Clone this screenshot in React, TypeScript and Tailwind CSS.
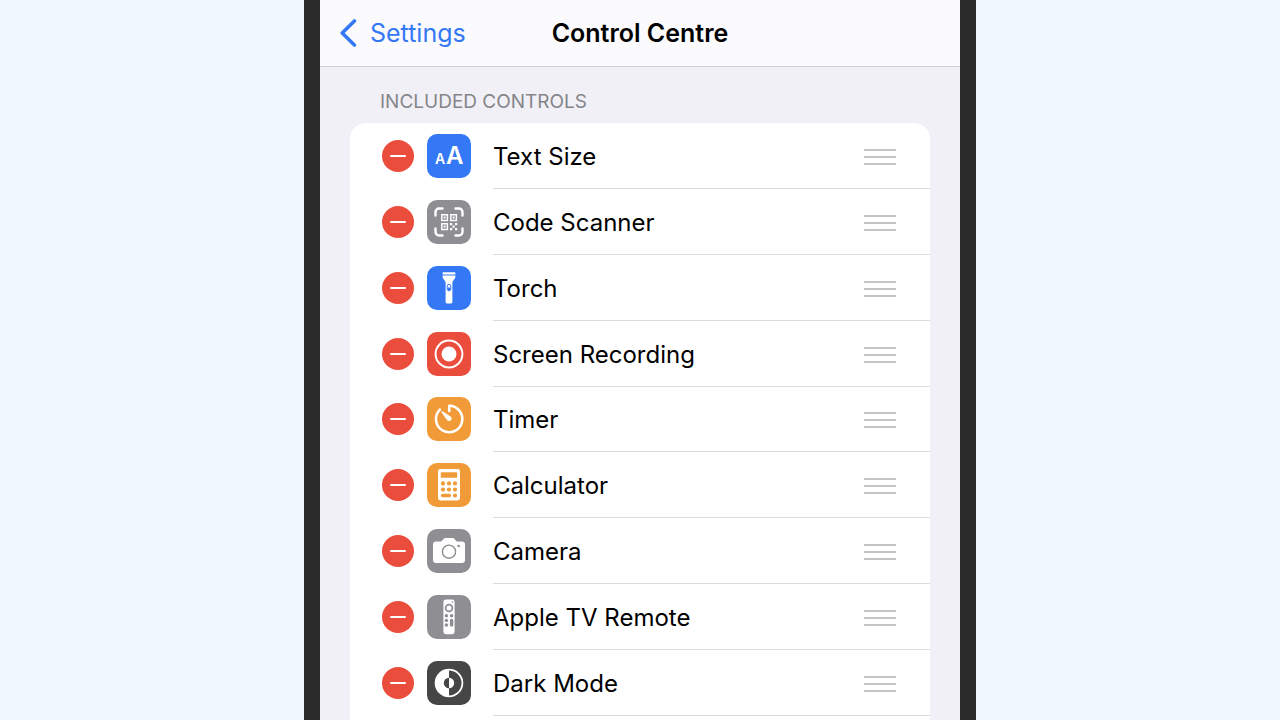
import type { ReactNode } from 'react';

interface Control {
    name: string;
    color: string;
    glyph: ReactNode;
}

// Glyphs share a 44x44 view box, the size of the tile they sit on
const controls: Control[] = [
    {
        name: 'Text Size',
        color: 'bg-[#3478f6]',
        glyph: (
            <g fill="#fff" className="font-semibold">
                <text x="8" y="30" fontSize="14">A</text>
                <text x="19" y="30" fontSize="24">A</text>
            </g>
        ),
    },
    {
        name: 'Code Scanner',
        color: 'bg-[#8e8e93]',
        glyph: (
            <>
                <path
                    fill="none"
                    stroke="#fff"
                    strokeWidth="2.4"
                    strokeLinecap="round"
                    d="M8.5 15.5V12a3.5 3.5 0 0 1 3.5-3.5h3.5M28.5 8.5H32a3.5 3.5 0 0 1 3.5 3.5v3.5M35.5 28.5V32a3.5 3.5 0 0 1-3.5 3.5h-3.5M15.5 35.5H12A3.5 3.5 0 0 1 8.5 32v-3.5"
                />
                <path fill="none" stroke="#fff" strokeWidth="1.5" d="M14.8 14.8h5.6v5.6h-5.6zM23.8 14.8h5.6v5.6h-5.6zM14.8 23.8h5.6v5.6h-5.6z" />
                <path fill="#fff" d="M16.6 16.6h2v2h-2zM25.6 16.6h2v2h-2zM16.6 25.6h2v2h-2zM23 23h2.2v2.2H23zM28 23h2.2v2.2H28zM25.5 25.5h2.2v2.2h-2.2zM23 28h2.2v2.2H23zM28 28h2.2v2.2H28z" />
            </>
        ),
    },
    {
        name: 'Torch',
        color: 'bg-[#3478f6]',
        glyph: (
            <>
                <path fill="#fff" d="M16.4 6.2h11.2a.8.8 0 0 1 .8.8v1.4H15.6V7a.8.8 0 0 1 .8-.8zM15.6 9.6h12.8v1.2c0 2.4-3 3.4-3 6.2v19a1.4 1.4 0 0 1-1.4 1.4h-4a1.4 1.4 0 0 1-1.4-1.4V17c0-2.8-3-3.8-3-6.2z" />
                <rect x="20.2" y="18.4" width="3.6" height="6.4" rx="1.8" fill="none" stroke="#3478f6" />
                <circle cx="22" cy="22.8" r="1.5" fill="#3478f6" />
            </>
        ),
    },
    {
        name: 'Screen Recording',
        color: 'bg-[#eb4d3d]',
        glyph: (
            <>
                <circle cx="22" cy="22" r="13.4" fill="none" stroke="#fff" strokeWidth="2" />
                <circle cx="22" cy="22" r="7.5" fill="#fff" />
            </>
        ),
    },
    {
        name: 'Timer',
        color: 'bg-[#f19a38]',
        glyph: (
            <>
                <path fill="none" stroke="#fff" strokeWidth="2.6" strokeLinecap="round" strokeLinejoin="round" d="M22.2 14V8.8A13.2 13.2 0 1 1 12.9 12.6" />
                <path fill="#fff" d="M14.6 14.4c.4-.4.8-.3 1.2 0l7.7 5a2.5 2.5 0 1 1-3.5 3.5l-5.4-7.4c-.2-.3-.3-.8 0-1.1z" />
            </>
        ),
    },
    {
        name: 'Calculator',
        color: 'bg-[#f19a38]',
        glyph: (
            <>
                <rect x="11" y="6" width="22" height="31.5" rx="2.4" fill="#fff" />
                <g fill="#f19a38">
                    <rect x="13.8" y="9.2" width="16.4" height="5.6" rx=".6" />
                    <circle cx="16" cy="20.4" r="2.1" />
                    <circle cx="22" cy="20.4" r="2.1" />
                    <circle cx="28" cy="20.4" r="2.1" />
                    <circle cx="16" cy="26.6" r="2.1" />
                    <circle cx="22" cy="26.6" r="2.1" />
                    <circle cx="28" cy="26.6" r="2.1" />
                    <rect x="13.9" y="30.8" width="10.2" height="3.4" rx="1.7" />
                    <circle cx="28" cy="32.5" r="2.1" />
                </g>
            </>
        ),
    },
    {
        name: 'Camera',
        color: 'bg-[#8e8e93]',
        glyph: (
            <>
                <path fill="#fff" d="M9 12.5h4.2c1 0 1.6-.4 2.2-1.2l.9-1.1c.7-.9 1.3-1.2 2.4-1.2h6.6c1.1 0 1.7.3 2.4 1.2l.9 1.1c.6.8 1.2 1.2 2.2 1.2H35a3 3 0 0 1 3 3V31a3 3 0 0 1-3 3H9a3 3 0 0 1-3-3V15.5a3 3 0 0 1 3-3z" />
                <circle cx="22" cy="22.7" r="6.6" fill="none" stroke="#8e8e93" strokeWidth="1.4" />
                <circle cx="31.6" cy="17" r="1.3" fill="#8e8e93" />
            </>
        ),
    },
    {
        name: 'Apple TV Remote',
        color: 'bg-[#8e8e93]',
        glyph: (
            <>
                <rect x="16.4" y="4.6" width="11.2" height="34.6" rx="2.4" fill="#fff" />
                <g fill="#8e8e93">
                    <circle cx="25.4" cy="7" r=".8" />
                    <circle cx="22" cy="13" r="3.4" fill="none" stroke="#8e8e93" strokeWidth="1.8" />
                    <circle cx="19.4" cy="20.8" r="1.7" />
                    <circle cx="24.6" cy="20.8" r="1.7" />
                    <circle cx="19.4" cy="25.4" r="1.7" />
                    <circle cx="19.4" cy="30" r="1.7" />
                    <rect x="22.9" y="23.7" width="3.4" height="8" rx="1.7" />
                </g>
            </>
        ),
    },
    {
        name: 'Dark Mode',
        color: 'bg-[#464646]',
        glyph: (
            <>
                <circle cx="22" cy="22" r="13.4" fill="none" stroke="#fff" strokeWidth="1.8" />
                <path fill="#fff" d="M22 8.6a13.4 13.4 0 0 0 0 26.8v-8.2a5.2 5.2 0 0 1 0-10.4z" />
                <path fill="#fff" d="M22 16.8a5.2 5.2 0 0 1 0 10.4z" />
            </>
        ),
    },
];

const ControlRow = ({ name, color, glyph }: Control) => (
    <li className="flex items-center pl-8">
        <button
            type="button"
            aria-label={`Remove ${name}`}
            className="flex h-8 w-8 shrink-0 items-center justify-center rounded-full bg-[#eb4d3d]"
        >
            <span className="h-0.5 w-4 rounded-full bg-white" />
        </button>
        <span className={`ml-[13px] h-11 w-11 shrink-0 overflow-hidden rounded-[10px] ${color}`}>
            <svg viewBox="0 0 44 44" className="h-full w-full" aria-hidden="true">
                {glyph}
            </svg>
        </span>
        <div className="ml-[22px] flex flex-1 items-center justify-between self-stretch border-b border-[#dcdcdf] pt-[3px] pr-[34px]">
            <span className="text-2xl leading-8">{name}</span>
            <button type="button" aria-label={`Reorder ${name}`} className="flex w-8 flex-col gap-[5px]">
                <span className="h-0.5 bg-[#c4c4c6]" />
                <span className="h-0.5 bg-[#c4c4c6]" />
                <span className="h-0.5 bg-[#c4c4c6]" />
            </button>
        </div>
    </li>
);

export default function App() {
    return (
        <div className="h-screen overflow-hidden bg-[#eff7ff] font-['Inter',sans-serif] text-black">
            <main className="mx-auto min-h-full w-full max-w-2xl border-x-16 border-[#2b2b2b] bg-[#f1f0f6]">
                <header className="grid h-[67px] grid-cols-[1fr_auto_1fr] items-center border-b border-[#d0d0d4] bg-[#fbfbfd] px-5">
                    <a href="#settings" className="flex items-center gap-3 text-[25px] leading-8 text-[#3478f6]">
                        <svg viewBox="0 0 18 30" className="h-[30px] w-[18px]" fill="none" aria-hidden="true">
                            <path d="M14.4 3 2.2 15l12.2 12" stroke="currentColor" strokeWidth="3.6" strokeLinecap="round" strokeLinejoin="round" />
                        </svg>
                        Settings
                    </a>
                    <h1 className="text-[25px] leading-8 font-semibold">Control Centre</h1>
                </header>

                <section className="px-[30px] pt-[23px]">
                    <h2 className="px-[30px] text-[19px] leading-6 text-[#85858a]">INCLUDED CONTROLS</h2>
                    <ul className="mt-[9px] grid min-h-[609px] auto-rows-fr overflow-hidden rounded-2xl bg-white pb-4">
                        {controls.map((control) => (
                            <ControlRow key={control.name} {...control} />
                        ))}
                    </ul>
                </section>
            </main>
        </div>
    );
}
